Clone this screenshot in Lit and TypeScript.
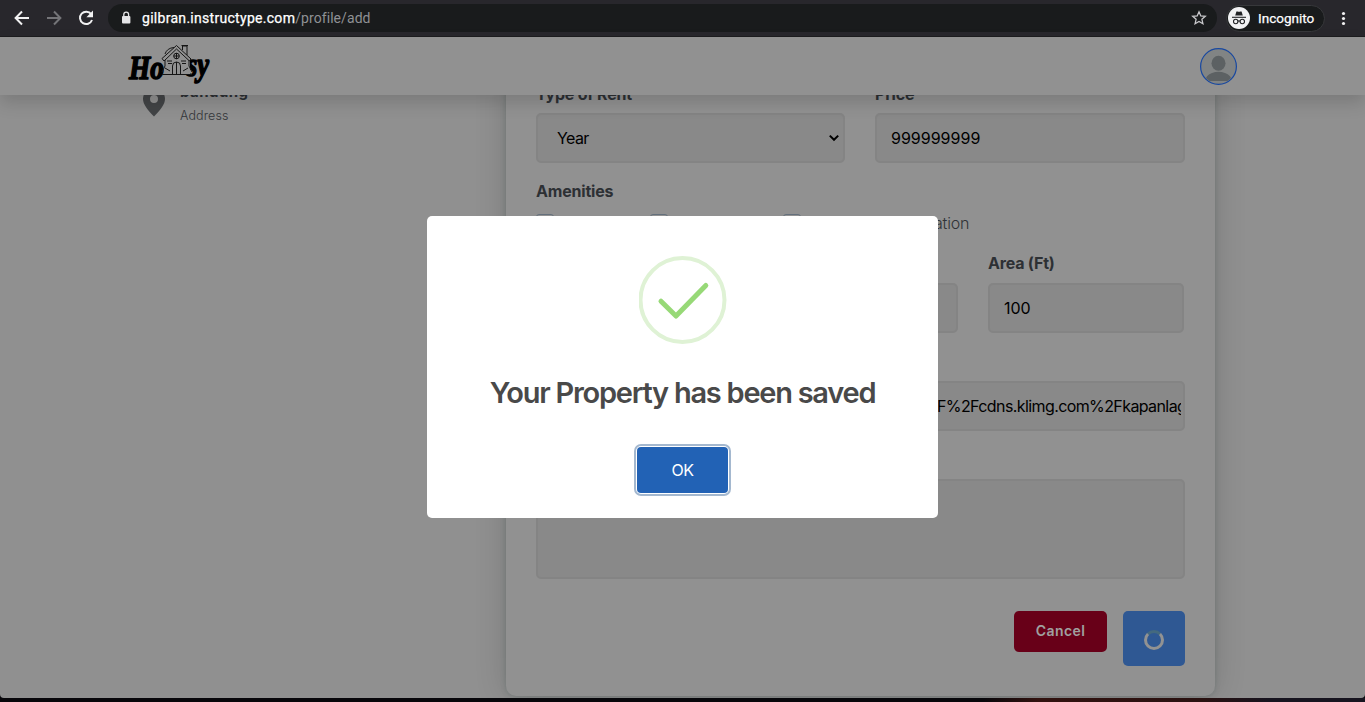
import { LitElement, html, css } from "lit";
import { customElement } from "lit/decorators.js";

@customElement("browser-bar")
class BrowserBar extends LitElement {
  static styles = css`
    :host { display: flex; align-items: center; height: 36px; background: #28272c; border-bottom: 1px solid #1c1c1e; font: 14px/20px Roboto, sans-serif; color: #fff; flex: none; }
    .nav { display: flex; width: 108px; padding-left: 12px; box-sizing: border-box; gap: 12px; }
    .url { display: flex; align-items: center; width: 1109px; height: 28px; border-radius: 14px; background: #191b1c; box-sizing: border-box; padding: 0 10px 0 12px; }
    .lock { margin-right: 10px; }
    .host { letter-spacing: 0.29px; -webkit-text-stroke: 0.25px #fff; }
    .path { color: #8f9194; flex: 1; letter-spacing: 0.07px; }
    .incog { display: flex; align-items: center; margin-left: 9px; width: 99px; height: 27px; box-sizing: border-box; border: 1px solid #37383b; border-radius: 14px; background: #191b1c; padding-left: 1px; gap: 8px; font-size: 13.5px; -webkit-text-stroke: 0.25px #fff; }
    .dots { margin-left: 10px; }
    svg { display: block; flex: none; }
  `;
  render() {
    return html`
      <div class="nav">
        <svg width="20" height="20" viewBox="0 0 20 20" fill="none" stroke="#f1f1f2" stroke-width="2"><path d="M17 10H4M10 3.5L3.6 10l6.4 6.5" /></svg>
        <svg width="20" height="20" viewBox="0 0 20 20" fill="none" stroke="#747478" stroke-width="2"><path d="M3 10h13M10 3.5l6.4 6.5-6.4 6.5" /></svg>
        <svg width="20" height="20" viewBox="0 0 20 20" fill="none"><path d="M15.2 6.2A6.2 6.2 0 1 0 16 12" stroke="#f1f1f2" stroke-width="2" /><path d="M17 2.6v6.6h-6.6z" fill="#f1f1f2" /></svg>
      </div>
      <div class="url">
        <svg class="lock" width="12" height="14" viewBox="0 0 12 14"><rect x="2" y="5" width="8.4" height="7.6" rx="1" fill="#e4e4e6" /><path d="M3.8 5.5V3.6a2.4 2.4 0 0 1 4.8 0v1.9" fill="none" stroke="#e4e4e6" stroke-width="1.3" /></svg>
        <span class="host">gilbran.instructype.com</span><span class="path">/profile/add</span>
        <svg width="16" height="16" viewBox="0 0 16 16" fill="none" stroke="#c9c9cc" stroke-width="1.3"><path d="M8 1.8l1.8 4.1 4.5.4-3.4 3 1 4.4L8 11.4l-3.9 2.3 1-4.4-3.4-3 4.5-.4z" /></svg>
      </div>
      <div class="incog">
        <svg width="22" height="22" viewBox="0 0 22 22"><circle cx="11" cy="11" r="11" fill="#f1f1f3" /><path d="M7.2 8.5l1.1-3.6q.3-.7 1-.5 1.7.6 3.4 0 .7-.2 1 .5l1.1 3.6z" fill="#222326" /><path d="M4 10.3h14" stroke="#222326" stroke-width="1.1" /><g fill="none" stroke="#222326" stroke-width="1.1"><circle cx="7.7" cy="14.5" r="2.2" /><circle cx="14.3" cy="14.5" r="2.2" /><path d="M9.9 14.2q1.1-.7 2.2 0" /></g></svg>
        <span>Incognito</span>
      </div>
      <svg class="dots" width="16" height="16" viewBox="0 0 16 16" fill="#f1f1f2"><circle cx="8.5" cy="3.5" r="1.6" /><circle cx="8.5" cy="8.5" r="1.6" /><circle cx="8.5" cy="13.5" r="1.6" /></svg>
    `;
  }
}

@customElement("site-header")
class SiteHeader extends LitElement {
  static styles = css`
    :host { display: flex; justify-content: space-between; align-items: center; height: 58px; box-sizing: border-box; padding: 0 128px 0 127px; background: #919191; box-shadow: 0 8px 16px rgba(0, 0, 0, 0.15); position: relative; z-index: 2; flex: none; }
    .logo, .avatar { display: block; }
    .word { font: italic 700 34px "Liberation Serif", serif; fill: #000; stroke: #000; stroke-width: 1.6; stroke-linejoin: round; }
  `;
  render() {
    return html`
      <svg class="logo" width="84" height="46" viewBox="0 0 84 46">
        <text class="word" x="2" y="36" textLength="35" lengthAdjust="spacingAndGlyphs">Ho</text>
        <text class="word" x="60" y="33" textLength="22" lengthAdjust="spacingAndGlyphs">sy</text>
        <path d="M36 16L49.5 3.5 63 16v15H38z" fill="#919191" />
        <g fill="none" stroke="#151515" stroke-width="1">
          <path d="M35 15.5L49.5 2.5 64 16l-1.500 2L49.500 6 37 18z" />
          <path d="M38 17v6M62 17v6M38 23l-3 6M62 23l3 6M35 31.5h30" />
          <path d="M55.5 7V3h4.500v9M54.500 2.500h6.500M38 11q2-6 9-6.500" />
          <circle cx="49.5" cy="13" r="2.8" /><path d="M49.5 10v6M46.7 13h5.6" />
          <path d="M45.5 31V23q0-4 4-4t4 4v8M49.5 19v12M40 18h5M41 20.5h4M54 18h5M55 20.5h4M38 25l5 3M61 25l-5 3" />
        </g>
      </svg>
      <svg class="avatar" width="37" height="37" viewBox="0 0 37 37">
        <defs><clipPath id="c"><circle cx="18.5" cy="18.5" r="17" /></clipPath></defs>
        <circle cx="18.5" cy="18.5" r="17.9" fill="#818484" stroke="#1848a0" stroke-width="1.2" />
        <g clip-path="url(#c)" fill="#5c6163"><ellipse cx="18.5" cy="15.3" rx="7" ry="7.5" /><path d="M5 33q1-6 7-8 6.500-2.500 13 0 6 2 7 8z" /></g>
      </svg>
    `;
  }
}

@customElement("property-form")
class PropertyForm extends LitElement {
  static styles = css`
    :host { display: flex; flex-direction: column; box-sizing: border-box; width: 709px; height: 631px; margin-top: -30px; padding: 17px 30px 30px; background: #919191; border-radius: 10px; box-shadow: 0 0 5px rgba(70, 90, 85, 0.35), 0 0 32px rgba(0, 0, 0, 0.16); font: 16px/24px Inter, sans-serif; color: #000; }
    .row { display: grid; column-gap: 30px; }
    .two { grid-template-columns: 309px 310px; }
    .three { grid-template-columns: repeat(3, 196px); height: 82px; align-items: end; }
    .label { color: #2d3034; font-weight: 700; letter-spacing: -0.2px; margin-bottom: 7px; height: 24px; }
    .three .label { margin-bottom: 8px; }
    .control { height: 50px; box-sizing: border-box; border: 2px solid #848484; border-radius: 5px; background: #898989; display: flex; align-items: center; padding: 0 14px; overflow: hidden; white-space: nowrap; }
    .select { justify-content: space-between; padding: 0 3px 0 19px; letter-spacing: -0.6px; }
    .amen { margin-top: 16px; }
    .checks { display: flex; height: 20px; margin-top: 4px; margin-bottom: 17px; }
    .check { box-sizing: border-box; width: 18px; height: 18px; border: 1px solid #64707c; border-radius: 3px; margin-right: 96px; }
    .check.second { margin-right: 115px; }
    .check.third { margin-right: 133px; }
    .more { font-weight: 300; color: #303337; line-height: 19px; letter-spacing: -0.2px; }
    .image { margin-top: 48px; padding: 0 2px 0 399px; letter-spacing: -0.6px; flex: none; }
    .image span { overflow: hidden; }
    .area { height: 100px; margin-top: 48px; flex: none; }
    .actions { display: flex; justify-content: flex-end; align-items: flex-start; gap: 16px; margin-top: 32px; }
    .cancel { width: 93px; height: 41px; border-radius: 5px; background: #680018; color: #a0a0a0; font: 600 14px/40px Inter, sans-serif; text-align: center; letter-spacing: 0.4px; }
    .save { width: 62px; height: 55px; border-radius: 5px; background: #2f5893; display: flex; align-items: center; justify-content: center; }
    .spin { box-sizing: border-box; width: 20px; height: 20px; border: 3px solid #929292; border-top-color: #44697f; border-radius: 50%; margin-top: 3px; }
  `;
  render() {
    return html`
      <div class="row two">
        <div>
          <div class="label">Type of Rent</div>
          <div class="control select"><span>Year</span><svg width="12" height="10" viewBox="0 0 12 10" fill="none" stroke="#000" stroke-width="2"><path d="M1.8 2.6L6 6.8l4.2-4.2" /></svg></div>
        </div>
        <div><div class="label">Price</div><div class="control">999999999</div></div>
      </div>
      <div class="label amen">Amenities</div>
      <div class="checks">
        <span class="check"></span><span class="check second"></span><span class="check third"></span><span class="more">ation</span>
      </div>
      <div class="row three">
        <div class="control"></div>
        <div class="control"></div>
        <div><div class="label">Area (Ft)</div><div class="control">100</div></div>
      </div>
      <div class="control image"><span>F%2Fcdns.klimg.com%2Fkapanlag</span></div>
      <div class="control area"></div>
      <div class="actions"><div class="cancel">Cancel</div><div class="save"><div class="spin"></div></div></div>
    `;
  }
}

@customElement("saved-dialog")
class SavedDialog extends LitElement {
  static styles = css`
    :host { position: absolute; z-index: 3; left: 427px; top: 216px; width: 511px; height: 302px; background: #fff; border-radius: 5px; display: flex; flex-direction: column; align-items: center; font-family: Inter, sans-serif; }
    .mark { display: block; margin-top: 40px; }
    .title { margin-top: 29px; font-weight: 600; font-size: 29px; line-height: 40px; color: #494949; letter-spacing: -1.26px; white-space: nowrap; }
    .ok { margin-top: 34px; width: 91px; height: 46px; border-radius: 4px; background: #2262b5; color: #fff; font-size: 16px; line-height: 46px; text-align: center; letter-spacing: -0.6px; box-shadow: 0 0 0 1px #fff, 0 0 0 3px #a4b8cf; }
  `;
  render() {
    return html`
      <svg class="mark" width="88" height="88" viewBox="0 0 88 88" fill="none"><circle cx="43.5" cy="44" r="42" stroke="#dff2d5" stroke-width="4" /><path d="M22 45.2L37 60 66.8 29.5" stroke="#97d977" stroke-width="5" stroke-linecap="round" stroke-linejoin="round" /></svg>
      <div class="title">Your Property has been saved</div>
      <div class="ok">OK</div>
    `;
  }
}

@customElement("app-root")
class AppRoot extends LitElement {
  static styles = css`
    :host { display: flex; flex-direction: column; width: 1365px; height: 702px; overflow: hidden; position: relative; background: #08070b; }
    .body { flex: none; height: 603px; display: flex; justify-content: space-between; overflow: hidden; background: #909090; padding: 0 150px 0 142px; border-radius: 0 0 4px 4px; box-sizing: border-box; }
    .place { display: flex; gap: 14px; margin-top: -13px; font: 13px/20px Inter, sans-serif; color: #34363a; }
    .pin { margin-top: 3px; }
    .city { font-weight: 700; font-size: 15px; color: #2c2f33; letter-spacing: 0.45px; }
    .address { margin-top: 4px; font-weight: 300; font-size: 12.5px; letter-spacing: 0.1px; }
    .desk { flex: 1; background: linear-gradient(90deg, #08070b 0 72%, #32120f 76%, #2a1110 88%, #17141f 93%); }
  `;
  render() {
    return html`
      <browser-bar></browser-bar>
      <site-header></site-header>
      <div class="body">
        <div class="place">
          <svg class="pin" width="24" height="32" viewBox="0 0 24 32"><path fill-rule="evenodd" d="M12 3A11 11 0 0 0 1 14c0 5.5 5 11.5 11 17.5C18 25.5 23 19.5 23 14A11 11 0 0 0 12 3zm0 7a4 4 0 1 1 0 8 4 4 0 0 1 0-8z" fill="#424446" /></svg>
          <div><div class="city">bandung</div><div class="address">Address</div></div>
        </div>
        <property-form></property-form>
      </div>
      <div class="desk"></div>
      <saved-dialog></saved-dialog>
    `;
  }
}
